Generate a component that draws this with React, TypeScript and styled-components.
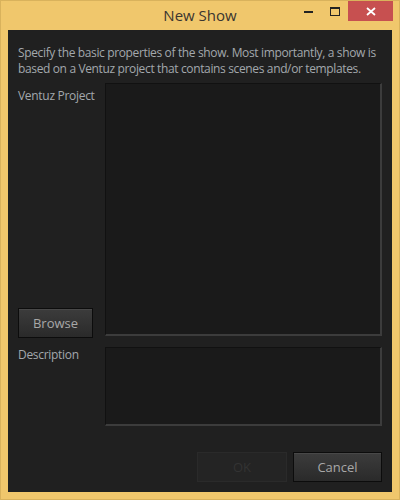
import React from "react";
import styled, { createGlobalStyle } from "styled-components";

const Global = createGlobalStyle`
  html, body { margin: 0; padding: 0; background: #f0c76c; }
  * { box-sizing: border-box; }
`;

const Frame = styled.div`
  width: 400px;
  height: 500px;
  background: #f0c76c;
  border: 1px solid #d9b25c;
  display: flex;
  flex-direction: column;
  font-family: "Segoe UI", "Open Sans", "Noto Sans", sans-serif;
`;

const TitleBar = styled.div`
  height: 29px;
  position: relative;
  display: flex;
  align-items: center;
  justify-content: center;
`;

const Title = styled.div`
  font-size: 15px;
  color: #3a3530;
  margin-top: -2px;
`;

const Controls = styled.div`
  position: absolute;
  right: 6px;
  top: 0;
  display: flex;
  height: 20px;
`;

const Ctl = styled.div<{ $close?: boolean; $w: number }>`
  width: ${(p) => p.$w}px;
  height: 20px;
  display: flex;
  align-items: center;
  justify-content: center;
  background: ${(p) => (p.$close ? "#c75050" : "transparent")};
`;

const Body = styled.div`
  flex: 1;
  margin: 0 7px 7px 7px;
  background: #202020;
  padding: 15px 10px 10px 10px;
  display: flex;
  flex-direction: column;
`;

const Intro = styled.div`
  color: #a3a8ad;
  font-size: 12px;
  line-height: 16px;
  letter-spacing: -0.36px;
  white-space: nowrap;
`;

const Row = styled.div<{ $h: number; $gap: number }>`
  display: grid;
  grid-template-columns: 87px 1fr;
  height: ${(p) => p.$h}px;
  margin-top: ${(p) => p.$gap}px;
`;

const Left = styled.div`
  display: flex;
  flex-direction: column;
  justify-content: space-between;
`;

const Label = styled.div<{ $top: number }>`
  color: #a3a8ad;
  font-size: 12px;
  line-height: 16px;
  letter-spacing: -0.3px;
  margin-top: ${(p) => p.$top}px;
`;

const Box = styled.div`
  background: #1a1a1a;
  border-top: 1px solid #111;
  border-left: 1px solid #111;
  border-right: 2px solid #3c3c3c;
  border-bottom: 2px solid #3c3c3c;
`;

const Button = styled.div<{ $disabled?: boolean; $w: number }>`
  width: ${(p) => p.$w}px;
  height: 30px;
  display: flex;
  align-items: center;
  justify-content: center;
  font-size: 13px;
  color: ${(p) => (p.$disabled ? "#333" : "#a8a8a8")};
  border: 1px solid ${(p) => (p.$disabled ? "#2a2a2a" : "#0c0c0c")};
  background: ${(p) =>
    p.$disabled ? "#242424" : "linear-gradient(#3c3c3c, #2a2a2a)"};
  box-shadow: ${(p) => (p.$disabled ? "none" : "inset 0 1px 0 #484848")};
`;

const BrowseWrap = styled.div`
  margin-bottom: -2px;
`;

const Footer = styled.div`
  display: flex;
  justify-content: flex-end;
  gap: 6px;
  margin-top: auto;
`;

export default function App() {
  return (
    <>
      <Global />
      <Frame>
        <TitleBar>
          <Title>New Show</Title>
          <Controls>
            <Ctl $w={27}>
              <svg width="9" height="3"><rect width="9" height="2" y="1" fill="#222" /></svg>
            </Ctl>
            <Ctl $w={26}>
              <svg width="10" height="9"><rect x="0.5" y="0.5" width="9" height="8" fill="none" stroke="#222" /><rect x="0" y="0" width="10" height="2" fill="#222" /></svg>
            </Ctl>
            <Ctl $w={45} $close>
              <svg width="10" height="9"><path d="M1 1 L9 8 M9 1 L1 8" stroke="#fff" strokeWidth="1.8" /></svg>
            </Ctl>
          </Controls>
        </TitleBar>
        <Body>
          <Intro>
            Specify the basic properties of the show. Most importantly, a show is
            <br />
            based on a Ventuz project that contains scenes and/or templates.
          </Intro>
          <Row $h={253} $gap={6}>
            <Left>
              <Label $top={5}>Ventuz Project</Label>
              <BrowseWrap>
                <Button $w={75}>Browse</Button>
              </BrowseWrap>
            </Left>
            <Box />
          </Row>
          <Row $h={79} $gap={11}>
            <Left>
              <Label $top={0}>Description</Label>
            </Left>
            <Box />
          </Row>
          <Footer>
            <Button $w={90} $disabled>OK</Button>
            <Button $w={89}>Cancel</Button>
          </Footer>
        </Body>
      </Frame>
    </>
  );
}
